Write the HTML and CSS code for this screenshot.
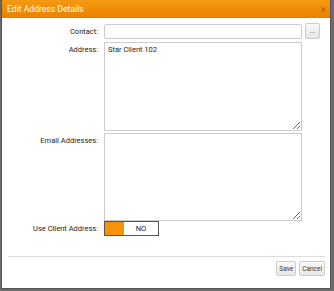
FILE: index.html
```
<!DOCTYPE html>
<html>
<head>
<meta charset="utf-8">
<link rel="stylesheet" href="styles.css">
</head>
<body>
<div class="dialog">
  <div class="titlebar">
    <span class="title">Edit Address Details</span>
    <span class="close">×</span>
  </div>
  <div class="content">
    <div class="row row-contact">
      <label class="lbl">Contact:</label>
      <div class="contact-field">
        <input class="input" type="text">
        <button class="dots">...</button>
      </div>
    </div>
    <div class="row row-address">
      <label class="lbl">Address:</label>
      <textarea class="area">Star Client 102</textarea>
    </div>
    <div class="row row-email">
      <label class="lbl">Email Addresses:</label>
      <textarea class="area"></textarea>
    </div>
    <div class="row row-toggle">
      <label class="lbl">Use Client Address:</label>
      <div class="toggle"><span class="knob"></span><span class="tval">NO</span></div>
    </div>
  </div>
  <div class="footer">
    <button class="btn">Save</button>
    <button class="btn">Cancel</button>
  </div>
</div>
</body>
</html>
```
FILE: styles.css
```
html, body { margin: 0; padding: 0; }
body {
  width: 334px; height: 291px;
  background: #6b6b6b;
  font-family: Roboto, "Noto Sans", sans-serif;
  font-size: 7.5px;
  color: #333;
  overflow: hidden;
}
.dialog {
  margin-left: 1px;
  width: 330px;
  height: 289px;
  background: #fff;
  box-sizing: border-box;
  border: 1px solid #555;
  border-top: none;
  display: flex;
  flex-direction: column;
}
.titlebar {
  height: 18px;
  background: linear-gradient(#f59a12, #ea8000);
  display: flex;
  align-items: center;
  justify-content: space-between;
  padding: 0 4px 0 5px;
  color: #fff;
  flex: none;
}
.title { font-size: 8.6px; color: #fff; }
.close { font-size: 10px; color: #b86200; }
.content {
  padding-top: 6px;
  display: flex;
  flex-direction: column;
  flex: none;
}
.row { display: flex; align-items: flex-start; }
.row-address { margin-top: 3px; }
.row-email { margin-top: 2px; }
.row-toggle { margin-top: 0; }
.lbl {
  width: 102px;
  text-align: right;
  padding-right: 6px;
  box-sizing: border-box;
  padding-top: 3px;
  font-size: 7.5px;
  color: #222;
  flex: none;
}
.contact-field { display: flex; gap: 3px; align-items: flex-start; }
.input {
  width: 198px; height: 15px;
  box-sizing: border-box;
  border: 1px solid #ccc;
  border-radius: 2px;
  margin: 0; padding: 0 3px;
  font: inherit;
}
.dots {
  width: 15px; height: 16px;
  margin: -1px 0 0 0; padding: 0;
  border: 1px solid #ccc; border-radius: 2px;
  background: linear-gradient(#f8f8f8, #e6e6e6);
  font-family: Roboto, sans-serif;
  font-size: 7px; color: #666;
}
.area {
  width: 198px; height: 89px;
  box-sizing: border-box;
  border: 1px solid #ccc;
  margin: 0; padding: 2px 3px;
  font: inherit; color: #222;
  resize: vertical;
}
.row-email .area { height: 88px; }
.toggle {
  width: 55px; height: 15px;
  box-sizing: border-box;
  border: 1px solid #555;
  display: flex;
  align-items: stretch;
  background: #fff;
}
.knob { width: 19px; background: #f7920b; }
.tval { flex: 1; display: flex; align-items: center; justify-content: center; font-size: 7.5px; color: #222; }
.footer {
  margin: auto 5px 0 6px;
  border-top: 1px solid #ddd;
  padding: 4px 0 12px 0;
  display: flex;
  justify-content: flex-end;
  gap: 3px;
}
.btn {
  height: 15px;
  margin: 0; padding: 0 2px;
  border: 1px solid #ccc; border-radius: 2px;
  background: linear-gradient(#fafafa, #e8e8e8);
  font-family: Roboto, sans-serif; font-size: 6.5px; color: #333;
}
```
